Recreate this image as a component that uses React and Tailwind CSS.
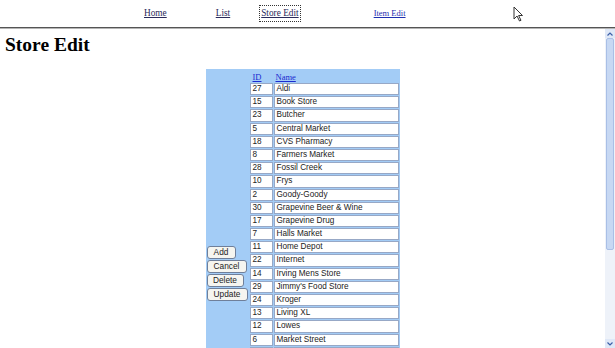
import React from "react";

const stores = [
	[27, "Aldi"],
	[15, "Book Store"],
	[23, "Butcher"],
	[5, "Central Market"],
	[18, "CVS Pharmacy"],
	[8, "Farmers Market"],
	[28, "Fossil Creek"],
	[10, "Frys"],
	[2, "Goody-Goody"],
	[30, "Grapevine Beer & Wine"],
	[17, "Grapevine Drug"],
	[7, "Halls Market"],
	[11, "Home Depot"],
	[22, "Internet"],
	[14, "Irving Mens Store"],
	[29, "Jimmy's Food Store"],
	[24, "Kroger"],
	[13, "Living XL"],
	[12, "Lowes"],
	[6, "Market Street"],
	[19, "Michaels"],
	[3, "Office Depot"],
	[25, "Petsmart"],
	[9, "Quiktrip"],
	[20, "Sams Club"],
	[1, "Target"],
	[4, "Tom Thumb"],
	[16, "Walgreens"],
	[21, "Walmart"],
	[26, "Whole Foods"],
];

const serif = "font-['Liberation_Serif','Times_New_Roman',serif]";
const sans = "font-['Liberation_Sans',Arial,sans-serif]";

const Cursor = () => (
	<svg className="absolute left-[513px] top-[6px]" width="11" height="16" viewBox="0 0 11 16">
		<path d="M1 1 L1 13 L4 10 L6.5 15 L8 14.3 L5.6 9.5 L9.5 9.5 Z" fill="#fff" stroke="#333" strokeWidth="1" strokeLinejoin="round" />
	</svg>
);

const Scrollbar = () => (
	<div className="flex w-[10px] shrink-0 flex-col bg-[#eef2f9]">
		<div className="flex h-[9px] items-center justify-center bg-[#dfe8f7] text-[#3b5ea8]">
			<svg width="6" height="4" viewBox="0 0 6 4">
				<path d="M0.5 3.5 L3 1 L5.5 3.5" fill="none" stroke="currentColor" strokeWidth="1.2" />
			</svg>
		</div>
		<div className="mx-[1px] h-[212px] rounded-[2px] border border-[#a9bfe6] bg-[#c7d8f3]" />
		<div className="flex-1" />
		<div className="flex h-[9px] items-center justify-center bg-[#dfe8f7] text-[#3b5ea8]">
			<svg width="6" height="4" viewBox="0 0 6 4">
				<path d="M0.5 0.5 L3 3 L5.5 0.5" fill="none" stroke="currentColor" strokeWidth="1.2" />
			</svg>
		</div>
	</div>
);

const Button = ({ label, width }) => (
	<button
		className={`h-[13px] ${width} rounded-[3px] border border-[#6f7f9a] bg-[#f5f5f0] text-center text-[8.3px] leading-[11px] text-[#222] ${sans}`}
	>
		{label}
	</button>
);

export default function App() {
	return (
		<div className="relative flex h-[348px] w-[615px] flex-col overflow-hidden bg-white">
			<div className={`flex h-[27px] shrink-0 items-center text-[9.3px] ${serif}`}>
				<a className="ml-[144px] text-[#2a2a5a] underline">Home</a>
				<a className="ml-[49px] text-[#2a2a5a] underline">List</a>
				<a className="ml-[31px] text-[#2a2a5a] underline outline-1 outline-dotted outline-offset-[1px] outline-[#333]">
					Store Edit
				</a>
				<a className="ml-[75px] text-[8.5px] text-[#1f2fb0] underline">Item Edit</a>
			</div>
			<div className="h-[2px] shrink-0 border-t border-[#555] bg-[#b5b5b5]" />
			<div className="flex min-h-0 flex-1">
				<div className="min-w-0 flex-1 overflow-hidden">
					<h1 className={`mt-[4px] pl-[5px] text-[19.5px] leading-[23px] font-bold text-black ${serif}`}>
						Store Edit
					</h1>
					<div className="mx-auto mt-[13px] flex w-[194px] gap-[1px] bg-[#a3ccf6] p-[1px]">
						<div className="flex w-[42px] flex-col items-start justify-center gap-[1px]">
							<Button label="Add" width="w-[29px]" />
							<Button label="Cancel" width="w-[40px]" />
							<Button label="Delete" width="w-[37px]" />
							<Button label="Update" width="w-[41px]" />
						</div>
						<div className={`grid w-[149px] grid-cols-[23px_125px] gap-[1px] text-[8.2px] ${sans}`}>
							<a className={`h-[12px] pl-[3px] text-[8.5px] leading-[14px] text-[#1a2bd0] underline ${serif}`}>
								ID
							</a>
							<a className={`h-[12px] pl-[2px] text-[8.5px] leading-[14px] text-[#1a2bd0] underline ${serif}`}>
								Name
							</a>
							{stores.map(([id, name]) => (
								<React.Fragment key={id}>
									<div className="h-[12.2px] border border-[#97a8c6] bg-white pl-[2px] leading-[10px] text-[#222]">
										{id}
									</div>
									<div className="h-[12.2px] border border-[#97a8c6] bg-white pl-[2px] leading-[10px] text-[#222]">
										{name}
									</div>
								</React.Fragment>
							))}
						</div>
					</div>
				</div>
				<Scrollbar />
			</div>
			<Cursor />
		</div>
	);
}
